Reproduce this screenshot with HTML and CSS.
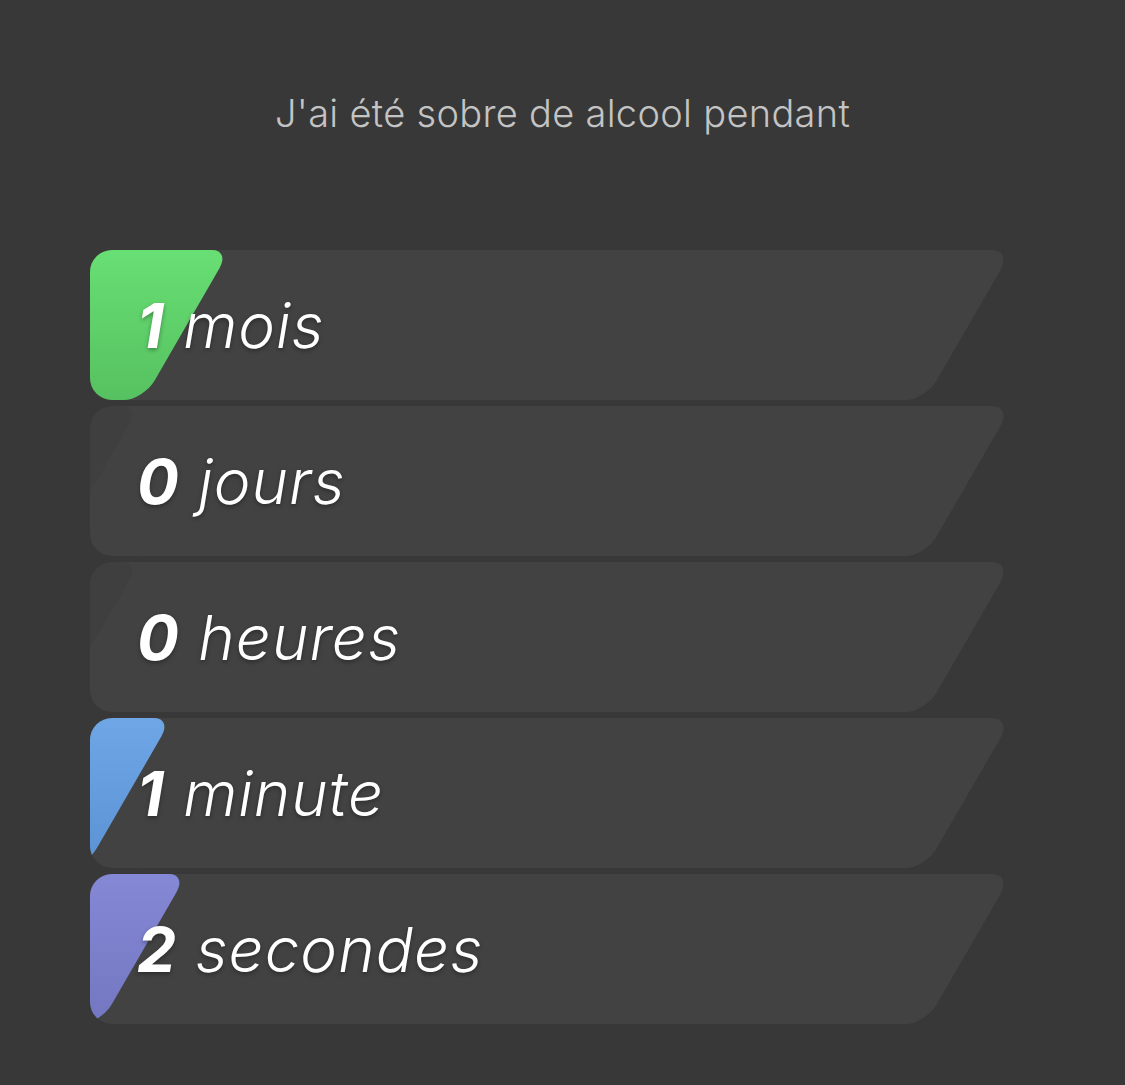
FILE: index.html
```html
<!DOCTYPE html>
<html lang="fr">
  <head>
    <meta charset="UTF-8">
    <meta name="viewport" content="width=device-width, initial-scale=1.0">
    <title>Sobriété</title>
    <link rel="stylesheet" href="styles.css">
  </head>
<body>
  <div class="ecran">
    <p class="titre">J'ai été sobre de alcool pendant</p>

    <div class="compteurs">
      <div class="ligne">
        <div class="remplissage-cadre"><div class="remplissage vert" style="width:140px"></div></div>
        <p class="valeur"><strong>1</strong> mois</p>
      </div>
      <div class="ligne">
        <div class="remplissage-cadre"><div class="remplissage vide" style="width:50px"></div></div>
        <p class="valeur"><strong>0</strong> jours</p>
      </div>
      <div class="ligne">
        <div class="remplissage-cadre"><div class="remplissage vide" style="width:50px"></div></div>
        <p class="valeur"><strong>0</strong> heures</p>
      </div>
      <div class="ligne">
        <div class="remplissage-cadre"><div class="remplissage bleu" style="width:82px"></div></div>
        <p class="valeur"><strong>1</strong> minute</p>
      </div>
      <div class="ligne">
        <div class="remplissage-cadre"><div class="remplissage violet" style="width:97px"></div></div>
        <p class="valeur"><strong>2</strong> secondes</p>
      </div>
    </div>
  </div>
</body>
</html>
```

FILE: styles.css
```css
:root {
  --color-fondo: #383838;
  --color-ligne: #424242;
  --color-titre: #c4c4c4;
  --inclinaison: -30deg;
}

body {
  margin: 0;
  background-color: var(--color-fondo);
  font-family: Inter, "Noto Sans", sans-serif;
  color: white;
}

.ecran {
  padding: 88px 0 60px 90px;
}

.titre {
  margin: 0 90px 0 0;
  text-align: center;
  font-size: 38px;
  font-weight: 300;
  line-height: 50px;
  color: var(--color-titre);
  letter-spacing: 0.3px;
}

.compteurs {
  display: flex;
  flex-direction: column;
  gap: 6px;
  width: 922px;
  margin-top: 112px;
}

.ligne {
  position: relative;
  height: 150px;
  display: flex;
  align-items: center;
}

/* fond : rectangle a gauche + parallelogramme a droite */
.ligne::before,
.ligne::after {
  content: "";
  position: absolute;
  top: 0;
  bottom: 0;
  background-color: var(--color-ligne);
  z-index: 0;
}

.ligne::before {
  left: 0;
  width: 220px;
  border-radius: 22px 0 0 22px;
}

.ligne::after {
  left: 120px;
  right: 0;
  border-radius: 20px;
  transform: skewX(var(--inclinaison));
  transform-origin: top left;
}

.remplissage-cadre {
  position: absolute;
  inset: 0;
  overflow: hidden;
  border-radius: 22px 0 0 22px;
  z-index: 1;
}

.remplissage {
  position: absolute;
  top: 0;
  bottom: 0;
  left: 0;
  border-radius: 0 18px 20px 0;
  transform: skewX(var(--inclinaison));
  transform-origin: top left;
}

.remplissage::before {
  content: "";
  position: absolute;
  top: 0;
  bottom: 0;
  right: 100%;
  width: 120px;
  background: inherit;
}

.remplissage.vert {
  background: linear-gradient(#68df74, #56c160);
}

.remplissage.bleu {
  background: linear-gradient(#6fa6e6, #5a92d4);
}

.remplissage.violet {
  background: linear-gradient(#8588d5, #7376c0);
}

.remplissage.vide {
  background: rgba(0, 0, 0, 0.04);
}

.valeur {
  position: relative;
  z-index: 2;
  margin: 1px 0 0 47px;
  font-family: Inter, "Noto Sans", sans-serif;
  font-size: 62px;
  font-style: italic;
  font-weight: 300;
  letter-spacing: 1px;
  text-shadow: 0 2px 4px rgba(0, 0, 0, 0.35);
}

.valeur strong {
  font-weight: 700;
}
```
